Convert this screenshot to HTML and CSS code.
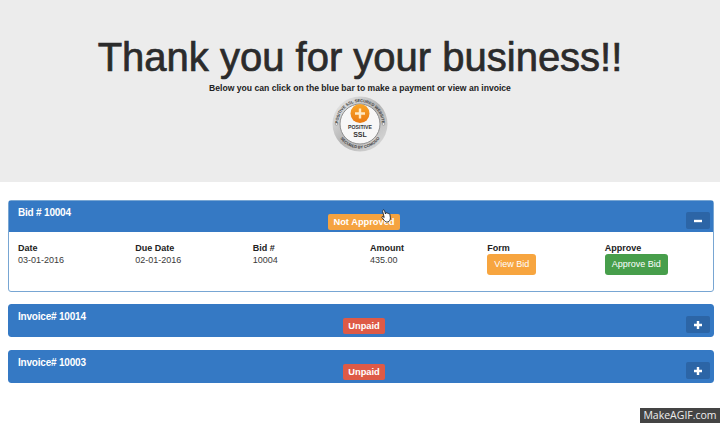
FILE: index.html
```html
<!DOCTYPE html>
<html lang="en">
<head>
  <meta charset="UTF-8">
  <title>Thank you for your business</title>
  <link rel="stylesheet" href="styles.css">
</head>
<body>
  <div class="hero">
    <h1>Thank you for your business!!</h1>
    <p>Below you can click on the blue bar to make a payment or view an invoice</p>
    <svg class="seal" width="58" height="58" viewBox="0 0 58 58">
      <defs>
        <linearGradient id="ring" x1="0" y1="0" x2="1" y2="1">
          <stop offset="0" stop-color="#f0f0f0"/>
          <stop offset="0.5" stop-color="#b4b4b4"/>
          <stop offset="1" stop-color="#dedede"/>
        </linearGradient>
        <linearGradient id="orange" x1="0" y1="0" x2="0" y2="1">
          <stop offset="0" stop-color="#f9a62a"/>
          <stop offset="1" stop-color="#ea7a12"/>
        </linearGradient>
        <path id="arcTop" d="M7 29 A22 22 0 0 1 51 29"/>
        <path id="arcBottom" d="M4.500 29 A24.500 24.500 0 0 0 53.500 29"/>
      </defs>
      <circle cx="29" cy="29" r="27.500" fill="url(#ring)"/>
      <circle cx="29" cy="29" r="20" fill="#f7f7f7" stroke="#8f8f8f"/>
      <circle cx="5.500" cy="29" r="1.300" fill="#f4f4f4" stroke="#777" stroke-width="0.500"/>
      <circle cx="52.500" cy="29" r="1.300" fill="#f4f4f4" stroke="#777" stroke-width="0.500"/>
      <text class="seal-ring"><textPath href="#arcTop" startOffset="50%" text-anchor="middle">POSITIVE SSL SECURED WEBSITE</textPath></text>
      <text class="seal-ring"><textPath href="#arcBottom" startOffset="50%" text-anchor="middle">SECURED BY COMODO</textPath></text>
      <circle cx="29" cy="18.500" r="9.500" fill="url(#orange)"/>
      <path d="M29 13.500v10M24 18.500h10" stroke="#ffe9c4" stroke-width="2.400"/>
      <text class="seal-small" x="29" y="33.500" text-anchor="middle">POSITIVE</text>
      <text class="seal-big" x="29" y="41.500" text-anchor="middle">SSL</text>
    </svg>
  </div>

  <div class="panels">
    <div class="panel open">
      <div class="panel-head">
        <span class="panel-title">Bid # 10004</span>
        <span class="label label-orange">Not Approved</span>
        <span class="toggle">
          <svg width="10" height="10" viewBox="0 0 10 10"><path d="M1 5h8" stroke="#fff" stroke-width="2.400"/></svg>
        </span>
        <svg class="cursor" width="12" height="14" viewBox="0 0 12 14">
          <path d="M3 1.200c.6-.6 1.300-.3 1.500.4l1 3.400.3-1c.6-.5 1.200-.3 1.400.3.5-.4 1.200-.2 1.400.4.6-.2 1.200.2 1.300.8l.5 3.400c.1 1.600-.9 3.600-2.400 4.100H6.200C5 12.800 3.400 10.300 2 8.600c-.5-.7.200-1.400 1-1l1.200.9L2.700 2.600c-.1-.6 0-1.100.3-1.400z" fill="#fff" stroke="#222" stroke-width="0.900"/>
        </svg>
      </div>
      <div class="panel-body">
        <div class="col"><b>Date</b><span>03-01-2016</span></div>
        <div class="col"><b>Due Date</b><span>02-01-2016</span></div>
        <div class="col"><b>Bid #</b><span>10004</span></div>
        <div class="col"><b>Amount</b><span>435.00</span></div>
        <div class="col"><b>Form</b><a class="btn btn-orange">View Bid</a></div>
        <div class="col"><b>Approve</b><a class="btn btn-green">Approve Bid</a></div>
      </div>
    </div>

    <div class="panel">
      <div class="panel-head">
        <span class="panel-title">Invoice# 10014</span>
        <span class="label label-red">Unpaid</span>
        <span class="toggle">
          <svg width="10" height="10" viewBox="0 0 10 10"><path d="M1 5h8M5 1v8" stroke="#fff" stroke-width="2.400"/></svg>
        </span>
      </div>
    </div>

    <div class="panel">
      <div class="panel-head">
        <span class="panel-title">Invoice# 10003</span>
        <span class="label label-red">Unpaid</span>
        <span class="toggle">
          <svg width="10" height="10" viewBox="0 0 10 10"><path d="M1 5h8M5 1v8" stroke="#fff" stroke-width="2.400"/></svg>
        </span>
      </div>
    </div>
  </div>

  <div class="watermark">MakeAGIF.com</div>
</body>
</html>
```

FILE: styles.css
```css
body {
  margin: 0;
  font-family: "Liberation Sans", Arial, sans-serif;
  font-size: 9px;
  color: #3a3a3a;
  background: #fff;
}

.hero {
  height: 182px;
  box-sizing: border-box;
  padding-top: 32px;
  background: #ececec;
  text-align: center;
}
.hero h1 {
  margin: 0;
  font-size: 40px;
  line-height: 50px;
  font-weight: normal;
  color: #2b2b2b;
  -webkit-text-stroke: 0.7px #2b2b2b;
}
.hero p {
  margin: 0;
  font-size: 8.600px;
  line-height: 12px;
  font-weight: bold;
  color: #222;
}
.seal {
  display: block;
  margin: 1px auto 0;
}
.seal-ring {
  font-size: 4px;
  font-weight: bold;
  fill: #3c3c3c;
}
.seal-small {
  font-size: 5.200px;
  font-weight: bold;
  fill: #333;
}
.seal-big {
  font-size: 7px;
  font-weight: bold;
  fill: #333;
}

.panels {
  display: flex;
  flex-direction: column;
  gap: 12px;
  margin: 18px 6px 0 8px;
}
.panel {
  border: 1px solid #3579c4;
  border-radius: 3px;
  background: #fff;
}
.panel.open {
  border-color: #78a6d3;
}
.panel:last-child {
  margin-top: 1px;
}
.panel-head {
  position: relative;
  display: grid;
  grid-template-columns: 1fr auto 1fr;
  height: 31px;
  padding: 0 3px 0 9px;
  background: #3579c4;
  color: #fff;
}
.panel-title {
  font-size: 10px;
  letter-spacing: -0.2px;
  line-height: 12px;
  padding-top: 6px;
  font-weight: bold;
}
.label {
  align-self: end;
  margin-bottom: 2px;
  padding: 0 5px;
  height: 16px;
  line-height: 16px;
  border-radius: 2px;
  font-size: 9.300px;
  font-weight: bold;
  color: #fff;
}
.label-orange {
  background: #f5a340;
}
.label-red {
  background: #de5a46;
}
.toggle {
  justify-self: end;
  align-self: end;
  display: flex;
  align-items: center;
  justify-content: center;
  width: 24px;
  height: 17px;
  margin-bottom: 3px;
  border-radius: 2px;
  background: #2c65a6;
}
.cursor {
  position: absolute;
  left: 371px;
  top: 8px;
}

.panel-body {
  display: grid;
  grid-template-columns: repeat(6, 1fr);
  height: 59px;
  padding-top: 10px;
  box-sizing: border-box;
}
.col {
  display: flex;
  flex-direction: column;
  align-items: flex-start;
  padding-left: 9px;
  line-height: 12px;
}
.col b {
  color: #222;
}
.btn {
  padding: 0 7px;
  height: 21px;
  line-height: 21px;
  border-radius: 3px;
  color: #fff;
}
.btn-orange {
  background: #f7a53f;
}
.btn-green {
  background: #479e4b;
}

.watermark {
  position: absolute;
  right: 0;
  top: 408px;
  width: 80px;
  height: 15px;
  line-height: 15px;
  text-align: center;
  font-family: "Open Sans", sans-serif;
  font-size: 10.500px;
  color: #eee;
  background: #444;
}
```
